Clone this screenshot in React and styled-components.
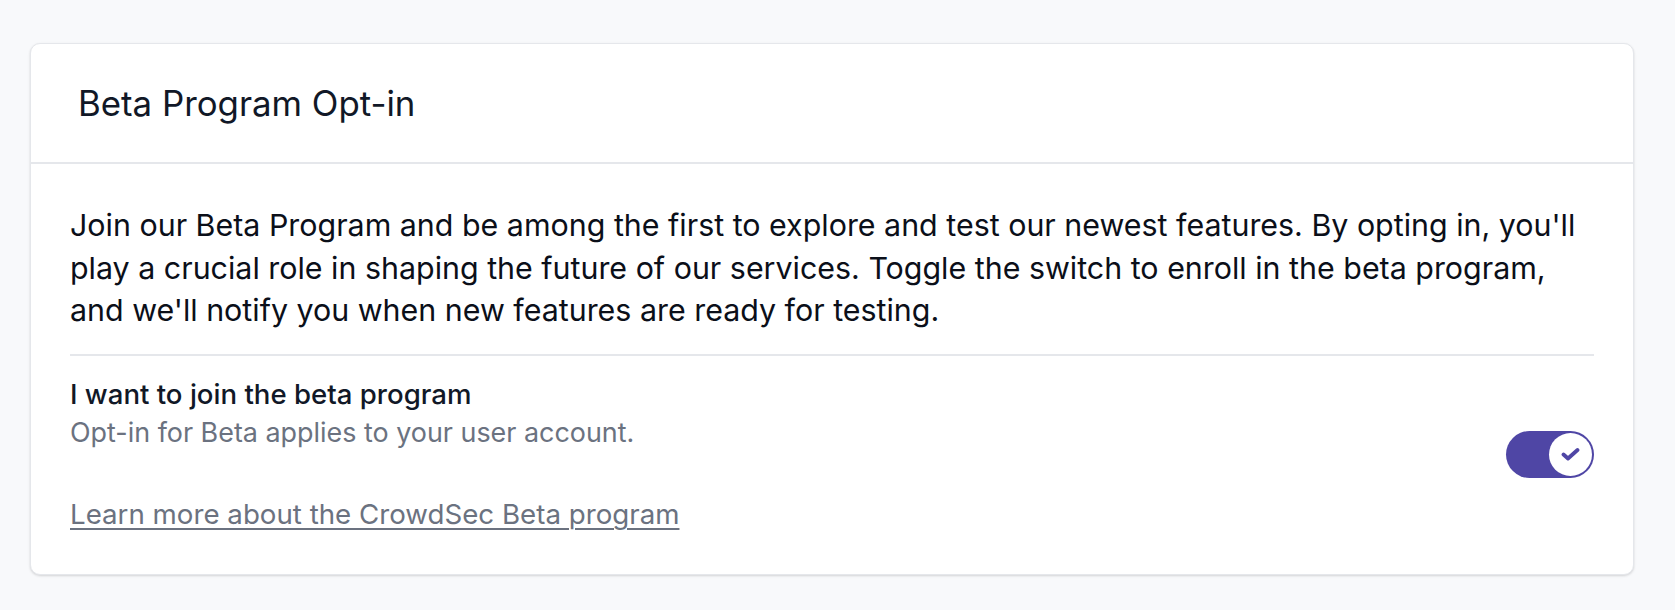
import { useState } from "react";
import styled, { createGlobalStyle } from "styled-components";

const GlobalStyle = createGlobalStyle`
  body {
    margin: 0;
    background: #f8f9fb;
    font-family: Inter, "Noto Sans", sans-serif;
    color: #111827;
  }
`;

const Page = styled.main`
  padding: 43px 41px 35px 30px;
`;

const Card = styled.section`
  background: #fff;
  border: 1px solid #e5e7eb;
  border-radius: 10px;
  box-shadow: 0 1px 3px rgba(0, 0, 0, 0.1), 0 1px 2px rgba(0, 0, 0, 0.06);
`;

const Header = styled.header`
  height: 118px;
  display: flex;
  align-items: center;
  padding: 0 47px;
  border-bottom: 2px solid #e5e7eb;
`;

const Title = styled.h2`
  margin: 0;
  font-size: 34.8px;
  font-weight: 400;
  line-height: 48px;
`;

const Body = styled.div`
  padding: 40px 39px 41px 39px;
`;

const Intro = styled.p`
  margin: 0;
  font-size: 30.4px;
  line-height: 42.7px;
  color: #0b0f19;
`;

const Divider = styled.hr`
  margin: 22px 0 19px;
  border: none;
  height: 2px;
  background: #e5e7eb;
`;

const OptRow = styled.div`
  display: flex;
  align-items: center;
  justify-content: space-between;
  gap: 24px;
`;

const OptText = styled.div`
  display: flex;
  flex-direction: column;
`;

const OptLabel = styled.span`
  font-size: 27.6px;
  font-weight: 450;
  line-height: 38px;
`;

const OptHint = styled.span`
  font-size: 26.9px;
  line-height: 38px;
  color: #6b7280;
`;

const LearnMore = styled.a`
  margin-top: 44px;
  font-size: 27.7px;
  line-height: 38px;
  color: #6b7280;
  text-decoration: underline;
  text-decoration-thickness: 2px;
  text-underline-offset: 4px;
  cursor: pointer;
  align-self: flex-start;
`;

const Switch = styled.button`
  flex-shrink: 0;
  width: 88px;
  height: 47px;
  padding: 2px;
  border: none;
  border-radius: 24px;
  background: ${({ $on }) => ($on ? "#4f46a5" : "#d1d5db")};
  display: flex;
  justify-content: ${({ $on }) => ($on ? "flex-end" : "flex-start")};
  align-items: center;
  cursor: pointer;
`;

const Knob = styled.span`
  width: 43px;
  height: 43px;
  border-radius: 50%;
  background: #fff;
  display: flex;
  align-items: center;
  justify-content: center;
  color: #4f46a5;
`;

const BetaOptIn = () => {
  const [enrolled, setEnrolled] = useState(true);

  return (
    <Card>
      <Header>
        <Title>Beta Program Opt-in</Title>
      </Header>
      <Body>
        <Intro>
          Join our Beta Program and be among the first to explore and test our newest features. By opting in,
          you'll play a crucial role in shaping the future of our services. Toggle the switch to enroll in the
          beta program, and we'll notify you when new features are ready for testing.
        </Intro>
        <Divider />
        <OptRow>
          <OptText>
            <OptLabel>I want to join the beta program</OptLabel>
            <OptHint>Opt-in for Beta applies to your user account.</OptHint>
            <LearnMore>Learn more about the CrowdSec Beta program</LearnMore>
          </OptText>
          <Switch
            role="switch"
            aria-checked={enrolled}
            $on={enrolled}
            onClick={() => setEnrolled((v) => !v)}
          >
            <Knob>
              {enrolled && (
                <svg width="19" height="15" viewBox="0 0 19 15" fill="none">
                  <path
                    d="M2.5 7.5 7 11.5 16.5 3"
                    stroke="currentColor"
                    strokeWidth="3.8"
                    strokeLinecap="round"
                    strokeLinejoin="round"
                  />
                </svg>
              )}
            </Knob>
          </Switch>
        </OptRow>
      </Body>
    </Card>
  );
};

export default function App() {
  return (
    <>
      <GlobalStyle />
      <Page>
        <BetaOptIn />
      </Page>
    </>
  );
}
